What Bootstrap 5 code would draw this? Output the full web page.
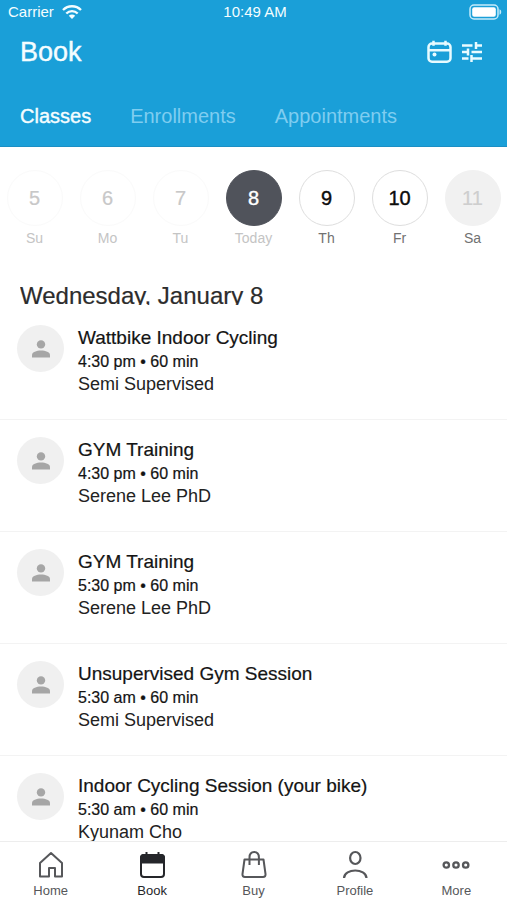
<!DOCTYPE html>
<html lang="en">
<head>
<meta charset="utf-8">
<meta name="viewport" content="width=device-width, initial-scale=1">
<title>Book</title>
<link href="https://cdn.jsdelivr.net/npm/bootstrap@5.3.0/dist/css/bootstrap.min.css" rel="stylesheet">
<style>
body { font-family: "Liberation Sans", Arial, sans-serif; color: #141414; background: #fff; }
svg { display: block; }
.app-header { background: #1a9fd8; border-bottom: 1px solid #1b8fc4; color: #f4fdff; }
.status-bar { height: 24px; font-size: 15px; line-height: 24px; padding: 0 5px 0 8px; }
.title-bar { padding: 10px 24px 8px 20px; }
.title-bar h1 { font-size: 27px; line-height: 36px; -webkit-text-stroke: .4px; }
.icon-btn { color: #e8fbff; background: none; border: 0; padding: 0; }
.tab-bar { padding: 25px 20px 17px; column-gap: 39px; font-size: 20px; line-height: 26px; }
.tab-bar a { color: #7fcdf0; text-decoration: none; }
.tab-bar a.active { color: #f4fdff; -webkit-text-stroke: .4px; }
.content { overflow-y: auto; scrollbar-width: none; min-height: 0; }
.content::-webkit-scrollbar { display: none; }
.days { padding-top: 23px; margin: 0 -2px; }
.day { background: none; border: 0; padding: 0; color: #717171; font-size: 14px; line-height: 18px; }
.day-num { width: 56px; height: 56px; border: 1px solid #dedede; color: #0c0c0c; font-size: 20px; margin-bottom: 3px; -webkit-text-stroke: .4px; }
.day.past { color: #c4c4c4; }
.day.past .day-num { border-color: #fafafa; color: #c8c8c8; -webkit-text-stroke: .2px; }
.day.today { color: #c4c4c4; }
.day.today .day-num { background: #50535b; border-color: #50535b; color: #fff; }
.day.closed .day-num { background: #f1f1f1; border-color: #f1f1f1; color: #cecece; -webkit-text-stroke: .2px; }
.date-title { font-size: 24px; line-height: 18px; margin: 40px 20px 3px; color: #2c2c2c; overflow: hidden; -webkit-text-stroke: .2px; }
.session { padding: 17px 17px 23px; column-gap: 14px; border-bottom: 1px solid #f3f3f3; }
.avatar { width: 47px; height: 47px; background: #f0f0f0; color: #a6a6a6; }
.session h3 { font-size: 19px; line-height: 26px; -webkit-text-stroke: .2px; }
.when { font-size: 16px; line-height: 22px; -webkit-text-stroke: .2px; }
.who { font-size: 18px; line-height: 23px; color: #222; }
.bottom-nav { border-top: 1px solid #ededed; padding: 8px 0 0; background: #fff; }
.bottom-nav a { color: #56575a; text-decoration: none; font-size: 13px; line-height: 18px; }
.bottom-nav svg { margin-bottom: 2px; }
.bottom-nav a.active { color: #25262a; }
</style>
<script src="https://cdn.jsdelivr.net/npm/bootstrap@5.3.0/dist/js/bootstrap.bundle.min.js"></script>
</head>
<body class="d-flex flex-column vh-100 overflow-hidden">
<svg class="d-none" aria-hidden="true">
  <symbol id="person" viewBox="0 0 20 20"><circle cx="10" cy="5.4" r="4.2" fill="currentColor"/><path d="M1 18.500v-2.300C1 13 5.500 11.500 10 11.500s9 1.500 9 4.700v2.300z" fill="currentColor"/></symbol>
</svg>

<header class="app-header flex-shrink-0">
  <div class="status-bar row gx-0 align-items-center">
    <div class="col d-flex align-items-center gap-2">
      <span>Carrier</span>
      <svg width="20" height="16" viewBox="0 0 20 16" fill="none" stroke="currentColor" stroke-width="2.300" role="img" aria-label="Wi-Fi"><path d="M1 6C6 1 14 1 19 6M4.300 9.500C7.500 6.200 12.500 6.200 15.700 9.500"/><path d="M6.800 11.700c1.900-1.700 4.500-1.700 6.400 0L10 15z" fill="currentColor" stroke="none"/></svg>
    </div>
    <div class="col-auto">10:49 AM</div>
    <div class="col d-flex justify-content-end">
      <svg width="33" height="16" viewBox="0 0 33 16" role="img" aria-label="Battery full"><rect x="1" y="1" width="28" height="14" rx="4" fill="none" stroke="#c5ebfa" stroke-width="1.500"/><rect x="3.200" y="3.200" width="23.600" height="9.600" rx="2" fill="#fff"/><path d="M30.500 5.300c2.300.6 2.300 4.800 0 5.400z" fill="#c5ebfa"/></svg>
    </div>
  </div>
  <div class="title-bar d-flex align-items-center justify-content-between">
    <h1 class="fw-normal mb-0">Book</h1>
    <div class="d-flex align-items-center gap-2">
      <button type="button" class="icon-btn" aria-label="Calendar">
        <svg width="27" height="24" viewBox="0 0 27 24" fill="none" stroke="currentColor" stroke-width="2.500"><rect x="2.500" y="3.500" width="22" height="18.200" rx="3.500"/><path d="M2.500 10.300h22M7.500 .8v5M19.500 .8v5"/><circle cx="8.500" cy="14.600" r="2" fill="currentColor" stroke="none"/></svg>
      </button>
      <button type="button" class="icon-btn" aria-label="Filters">
        <svg width="22" height="22" viewBox="0 0 22 22" fill="none" stroke="currentColor" stroke-width="2.500"><path d="M1 4.500h10.500M15 4.500h6M15 1v7M1 11h6M7 7.500v7M10.500 11H21M1 17.500h6.500M10.500 17.500H21M10.500 14v7"/></svg>
      </button>
    </div>
  </div>
  <nav class="tab-bar d-flex" aria-label="Booking type">
    <a href="#" class="active" aria-current="page">Classes</a>
    <a href="#">Enrollments</a>
    <a href="#">Appointments</a>
  </nav>
</header>

<main class="content flex-grow-1 overflow-x-hidden">
  <div class="days d-flex">
    <button type="button" class="day past col d-flex flex-column align-items-center"><span class="day-num rounded-circle d-flex align-items-center justify-content-center">5</span>Su</button>
    <button type="button" class="day past col d-flex flex-column align-items-center"><span class="day-num rounded-circle d-flex align-items-center justify-content-center">6</span>Mo</button>
    <button type="button" class="day past col d-flex flex-column align-items-center"><span class="day-num rounded-circle d-flex align-items-center justify-content-center">7</span>Tu</button>
    <button type="button" class="day today col d-flex flex-column align-items-center"><span class="day-num rounded-circle d-flex align-items-center justify-content-center">8</span>Today</button>
    <button type="button" class="day col d-flex flex-column align-items-center"><span class="day-num rounded-circle d-flex align-items-center justify-content-center">9</span>Th</button>
    <button type="button" class="day col d-flex flex-column align-items-center"><span class="day-num rounded-circle d-flex align-items-center justify-content-center">10</span>Fr</button>
    <button type="button" class="day closed col d-flex flex-column align-items-center"><span class="day-num rounded-circle d-flex align-items-center justify-content-center">11</span>Sa</button>
  </div>

  <h2 class="date-title fw-normal">Wednesday, January 8</h2>

  <ul class="list-unstyled mb-0">
    <li class="session d-flex align-items-start">
      <span class="avatar rounded-circle d-flex align-items-center justify-content-center flex-shrink-0"><svg width="20" height="20" aria-hidden="true"><use href="#person"/></svg></span>
      <div><h3 class="fw-normal mb-0">Wattbike Indoor Cycling</h3><div class="when">4:30 pm • 60 min</div><div class="who">Semi Supervised</div></div>
    </li>
    <li class="session d-flex align-items-start">
      <span class="avatar rounded-circle d-flex align-items-center justify-content-center flex-shrink-0"><svg width="20" height="20" aria-hidden="true"><use href="#person"/></svg></span>
      <div><h3 class="fw-normal mb-0">GYM Training</h3><div class="when">4:30 pm • 60 min</div><div class="who">Serene Lee PhD</div></div>
    </li>
    <li class="session d-flex align-items-start">
      <span class="avatar rounded-circle d-flex align-items-center justify-content-center flex-shrink-0"><svg width="20" height="20" aria-hidden="true"><use href="#person"/></svg></span>
      <div><h3 class="fw-normal mb-0">GYM Training</h3><div class="when">5:30 pm • 60 min</div><div class="who">Serene Lee PhD</div></div>
    </li>
    <li class="session d-flex align-items-start">
      <span class="avatar rounded-circle d-flex align-items-center justify-content-center flex-shrink-0"><svg width="20" height="20" aria-hidden="true"><use href="#person"/></svg></span>
      <div><h3 class="fw-normal mb-0">Unsupervised Gym Session</h3><div class="when">5:30 am • 60 min</div><div class="who">Semi Supervised</div></div>
    </li>
    <li class="session d-flex align-items-start">
      <span class="avatar rounded-circle d-flex align-items-center justify-content-center flex-shrink-0"><svg width="20" height="20" aria-hidden="true"><use href="#person"/></svg></span>
      <div><h3 class="fw-normal mb-0">Indoor Cycling Session (your bike)</h3><div class="when">5:30 am • 60 min</div><div class="who">Kyunam Cho</div></div>
    </li>
  </ul>
</main>

<nav class="bottom-nav d-flex flex-shrink-0" aria-label="Main">
  <a href="#" class="col d-flex flex-column align-items-center">
    <svg width="28" height="30" viewBox="0 0 28 30" fill="none" stroke="currentColor" stroke-width="2" stroke-linejoin="round"><path d="M3 13 14 3l11 10v13.500h-7V18h-6v8.500H3z"/></svg>Home</a>
  <a href="#" class="active col d-flex flex-column align-items-center" aria-current="page">
    <svg width="28" height="30" viewBox="0 0 28 30" fill="none" stroke="currentColor" stroke-width="2"><rect x="3" y="5" width="23" height="22" rx="3"/><path d="M3 12.500V8a3 3 0 0 1 3-3h17a3 3 0 0 1 3 3v4.500z" fill="currentColor"/><path d="M8.500 2v4M20.500 2v4"/></svg>Book</a>
  <a href="#" class="col d-flex flex-column align-items-center">
    <svg width="28" height="30" viewBox="0 0 28 30" fill="none" stroke="currentColor" stroke-width="2" stroke-linejoin="round"><path d="M4.500 9.500h19L25.500 24q.3 3-2.500 3H5q-2.800 0-2.500-3z"/><path d="M9.500 15V7.500q0-5.500 4.700-5.500t4.700 5.500V15"/></svg>Buy</a>
  <a href="#" class="col d-flex flex-column align-items-center">
    <svg width="28" height="30" viewBox="0 0 28 30" fill="none" stroke="currentColor" stroke-width="2.200"><ellipse cx="14.300" cy="8" rx="5.200" ry="6"/><path d="M3 28c.5-10 22-10 22.500 0"/></svg>Profile</a>
  <a href="#" class="col d-flex flex-column align-items-center">
    <svg width="28" height="30" viewBox="0 0 28 30" fill="none" stroke="currentColor" stroke-width="2.300"><circle cx="4.300" cy="15" r="2.700"/><circle cx="14" cy="15" r="2.700"/><circle cx="23.700" cy="15" r="2.700"/></svg>More</a>
</nav>
</body>
</html>
